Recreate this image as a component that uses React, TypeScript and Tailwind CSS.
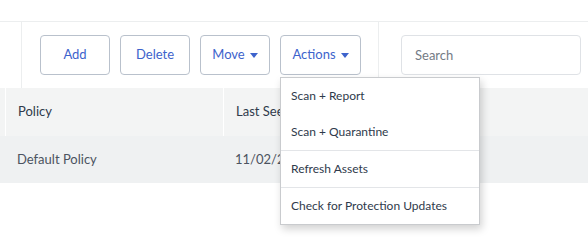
import { useState } from "react";

const btn =
  "h-[40px] rounded-[4px] border border-[#b9c1cc] bg-white text-[13px] text-[#3d63cc] flex items-center justify-center gap-[5px]";

function Caret() {
  return (
    <svg width="8" height="5" viewBox="0 0 8 5" className="mt-[1px]">
      <path d="M0 0h8L4 5z" fill="#3d63cc" />
    </svg>
  );
}

const actions = [
  ["Scan + Report", "Scan + Quarantine"],
  ["Refresh Assets"],
  ["Check for Protection Updates"],
];

export default function App() {
  const [open] = useState(true);

  return (
    <div className="w-[588px] h-[246px] bg-white overflow-hidden font-['Lato',sans-serif] text-[#2f3a4b]">
      <div className="h-[22px] border-b border-[#eceeef]" />

      {/* toolbar */}
      <div className="flex h-[66px]">
        <div className="w-[22px] border-r border-[#eceeef]" />
        <div className="flex items-center gap-[10px] pl-[18px] w-[357px] border-r border-[#eceeef]">
          <button className={`${btn} w-[70px]`}>Add</button>
          <button className={`${btn} w-[70px]`}>Delete</button>
          <button className={`${btn} w-[70px]`}>
            Move <Caret />
          </button>
          <div className="relative">
            <button className={`${btn} w-[81px]`}>
              Actions <Caret />
            </button>
            {open && (
              <div className="absolute left-0 top-[42px] w-[200px] z-10 bg-white border border-[#c9cbce] shadow-[2px_4px_8px_rgba(0,0,0,0.18)]">
                {actions.map((group, gi) => (
                  <div key={gi} className={gi > 0 ? "border-t border-[#e3e5e8]" : ""}>
                    {group.map((label) => (
                      <div key={label} className="h-[36px] flex items-center px-[10px] text-[12px] text-[#2f3a4b]">
                        {label}
                      </div>
                    ))}
                  </div>
                ))}
              </div>
            )}
          </div>
        </div>
        <div className="flex items-center pl-[22px]">
          <input
            placeholder="Search"
            className="w-[180px] h-[40px] rounded-[4px] border border-[#dfe2e6] px-[13px] text-[13px] placeholder:text-[#747b85] outline-none"
          />
        </div>
      </div>

      {/* table */}
      <div className="flex h-[48px] bg-[#f3f4f4] text-[13px]">
        <div className="w-[6px] border-r border-white" />
        <div className="w-[218px] flex items-center pl-[12px] border-r border-white">Policy</div>
        <div className="flex-1 flex items-center pl-[12px]">Last Seen</div>
      </div>
      <div className="flex h-[47px] bg-[#eff1f2] text-[13px] text-[#4b5360]">
        <div className="w-[224px] flex items-center pl-[17px]">Default Policy</div>
        <div className="flex-1 flex items-center pl-[11px]">11/02/2021</div>
      </div>
    </div>
  );
}
